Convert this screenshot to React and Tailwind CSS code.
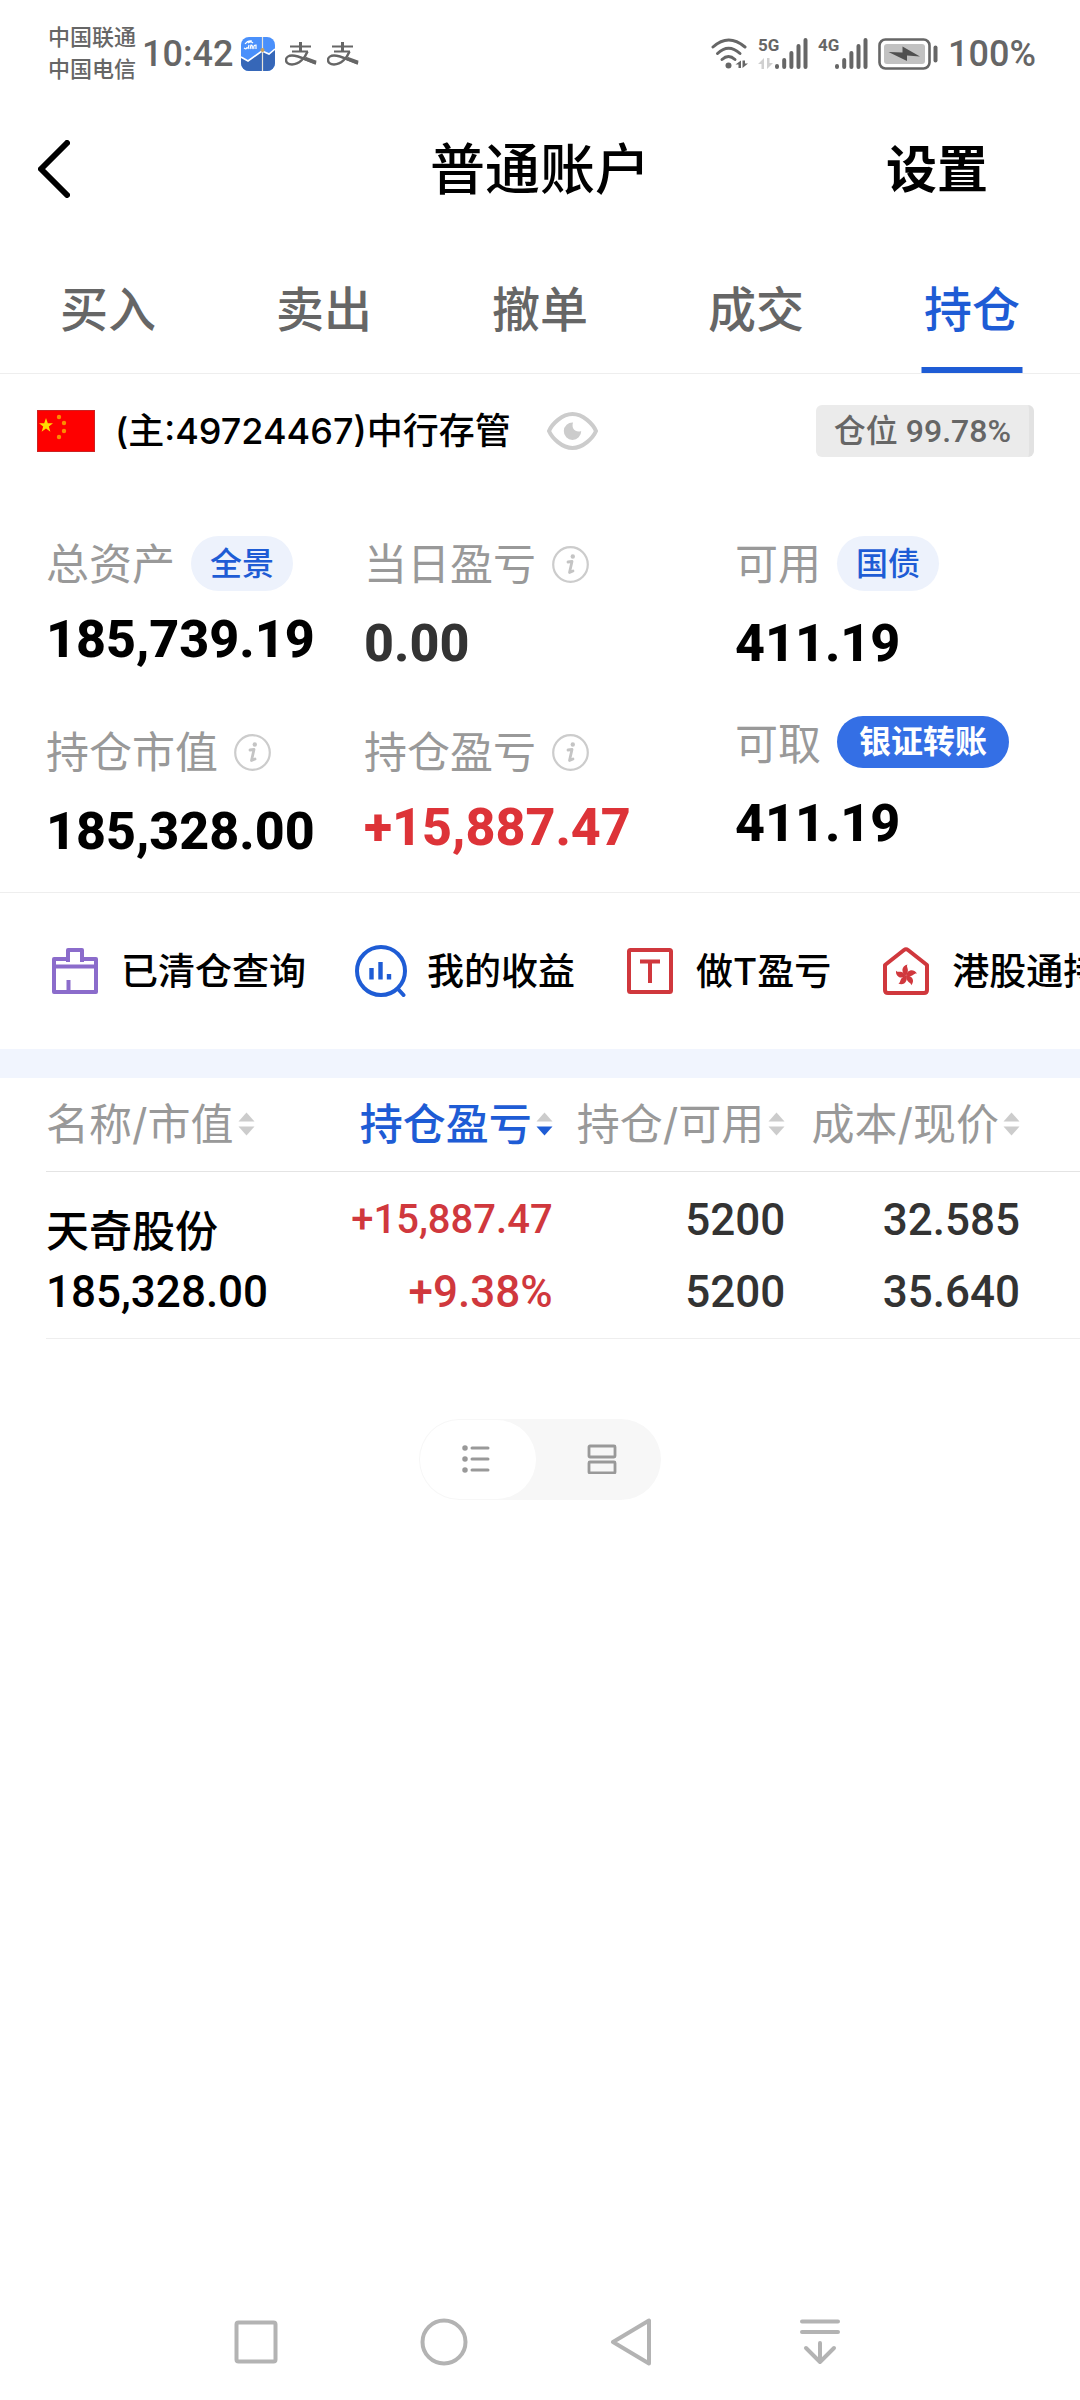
import React, { useState } from "react";

const tabs = ["买入", "卖出", "撤单", "成交", "持仓"];

const holdings = [
  {
    name: "天奇股份",
    value: "185,328.00",
    profit: "+15,887.47",
    rate: "+9.38%",
    amount: "5200",
    usable: "5200",
    cost: "32.585",
    price: "35.640",
  },
];

const StockAppIcon = () => (
  <svg className="size-[34px]" viewBox="0 0 34 34">
    <defs>
      <clipPath id="stock-app">
        <rect width="34" height="34" rx="8" />
      </clipPath>
    </defs>
    <g clipPath="url(#stock-app)">
      <rect width="34" height="34" fill="#4a90fb" />
      <path d="M0 20 L7 24 L21 14 L28 18 L34 12 V34 H0 Z" fill="#3667b8" />
      <path d="M0 20 L7 24 L21 14 L28 17 L34 12" fill="none" stroke="#fff" strokeWidth="1.6" />
      <path
        d="M3 11 q3 2 3-1 M7 12 l1-4 M9 12 l1-4 q2 0 1 4 M13 12 q-1-4 2-4 l0 4 M4 7 q3-4 7-3 M7 6 q3-2 5 0"
        fill="none"
        stroke="#fff"
        strokeWidth="1.2"
      />
      <path d="M21.500 0 V34" stroke="#e8e4da" strokeWidth="1.2" />
      <circle cx="21.500" cy="13" r="2" fill="#c9a05c" />
    </g>
  </svg>
);

const AlipayIcon = () => (
  <svg className="h-[24px] w-[32px]" viewBox="0 0 32 24" fill="none" stroke="#666">
    <path d="M5 4.500 H26 M7 9.500 H23" strokeWidth="2" />
    <path d="M15.500 0 V9" strokeWidth="3" />
    <path d="M22.500 9.500 C20 16 14 22.500 7 22.500 C3 22.500 1 20.500 1 18 C1 15 4 13.500 7 13.500 C14 13.500 21 18 31 21.500" strokeWidth="2.400" />
    <path d="M20 16.500 L31 20.500" strokeWidth="3.600" />
  </svg>
);

const WifiIcon = () => (
  <svg className="h-[31px] w-[37px]" viewBox="0 0 37 31" fill="none" stroke="#666" strokeWidth="3" strokeLinecap="round">
    <path d="M2 9 Q17.500 -5 34 9" />
    <path d="M6.500 15.500 Q17.500 5 29 15.500" />
    <path d="M11 21.500 Q17.500 15.500 24 21.500" />
    <circle cx="17.500" cy="27.500" r="3" fill="#666" stroke="none" />
    <path d="M30 22.500 V30 H27.500 V26.500 H24.500 Z M31.500 22.500 V30 L37 25.500 H34 V22.500 Z" fill="#666" stroke="none" />
  </svg>
);

const Signal = ({ label, data }) => (
  <div className="flex h-[31px]">
    <div className="flex w-[17px] flex-col justify-between">
      <span className="text-[17px] leading-[15px] font-bold">{label}</span>
      {data && (
        <svg className="h-[11px] w-[15px]" viewBox="0 0 15 11" fill="#d0d0d0">
          <path d="M6 0 V11 H3.500 V6 H0 Z M9 0 V11 L15 5 H11.500 V0 Z" />
        </svg>
      )}
    </div>
    <svg className="h-[31px] w-[33px]" viewBox="0 0 33 31" stroke="#666" strokeWidth="4" strokeLinecap="round">
      <path d="M2 28 V29 M9.200 22 V29 M16.400 15 V29 M23.500 8 V29 M30.500 2 V29" />
    </svg>
  </div>
);

const BatteryIcon = () => (
  <svg className="h-[32px] w-[60px]" viewBox="0 0 60 32">
    <rect x="1.500" y="1.500" width="50" height="29" rx="6" fill="none" stroke="#666" strokeWidth="2.600" />
    <rect x="6" y="6" width="41" height="20" rx="3" fill="#c2c2c2" />
    <path d="M10.500 14 L24.500 14.500 V8.500 L42 18.500 L29 17.500 V23 Z" fill="#505050" />
    <rect x="55.500" y="7.500" width="4" height="17" rx="2" fill="#666" />
  </svg>
);

const InfoIcon = () => (
  <svg className="size-[37px] self-center" viewBox="0 0 37 37" fill="none" stroke="#ccc">
    <circle cx="18.500" cy="18.500" r="17.300" strokeWidth="2.200" />
    <circle cx="20.800" cy="10.500" r="2.200" fill="#c4c4c4" stroke="none" />
    <path d="M16 16 L20 15.500 L17.500 26.500 L21 25" stroke="#c4c4c4" strokeWidth="2.800" strokeLinecap="round" strokeLinejoin="round" />
  </svg>
);

const FlagIcon = () => (
  <svg className="h-[42px] w-[58px]" viewBox="0 0 58 42">
    <rect x="0.500" y="0.500" width="57" height="41" fill="#fe0000" stroke="#c22" />
    <path d="M9 8 L10.800 13.300 H16 L11.800 16.500 L13.400 21.800 L9 18.600 L4.600 21.800 L6.200 16.500 L2 13.300 H7.200 Z" fill="#fd0" />
    <g fill="#fb8c00">
      <circle cx="22" cy="7" r="2.200" />
      <circle cx="27" cy="13" r="2.200" />
      <circle cx="27" cy="21" r="2.200" />
      <circle cx="22" cy="27" r="2.200" />
    </g>
  </svg>
);

const EyeIcon = () => (
  <svg className="h-[38px] w-[51px]" viewBox="0 0 51 38">
    <path
      d="M2 19 C5 12 15 2 25.500 2 C36 2 46 12 49 19 C46 26 36 36 25.500 36 C15 36 5 26 2 19 Z"
      fill="none"
      stroke="#ccc"
      strokeWidth="4"
    />
    <path d="M26 10.500 A8.700 8.700 0 1 0 34.200 19 C29 21 24 17 26 10.500 Z" fill="#ccc" />
  </svg>
);

const ClearedIcon = () => (
  <svg className="size-[46px]" viewBox="0 0 46 46" fill="none" stroke="#8b6ccb" strokeWidth="4" strokeLinejoin="round">
    <path d="M2 44 V11 H16 V2 H30 V11 H44 V44 Z" />
    <path d="M2 18.500 H44 M16.500 32 V44" />
    <path d="M16 11 V14 M30 11 V14" />
  </svg>
);

const IncomeIcon = () => (
  <svg className="size-[52px]" viewBox="0 0 52 52" fill="none" stroke="#1e5cd5" strokeWidth="4">
    <circle cx="26" cy="26" r="24" />
    <path d="M43 44 L48.500 50" strokeLinecap="round" />
    <path d="M16.500 23 V34.500 M25.500 17 V34.500 M34 29 V34.500" strokeWidth="4.400" />
  </svg>
);

const TradeIcon = () => (
  <svg className="size-[46px]" viewBox="0 0 46 46" fill="none" stroke="#d0383d" strokeWidth="4">
    <rect x="2" y="2" width="42" height="42" rx="1.500" />
    <path d="M13 13.500 H33 M23 13.500 V35" />
  </svg>
);

const HongKongIcon = () => (
  <svg className="h-[48px] w-[46px]" viewBox="0 0 46 48" fill="none" stroke="#d0383d" strokeWidth="4">
    <path d="M2 18 L21 3 Q23 1.500 25 3 L44 18 V43 Q44 46 41 46 H5 Q2 46 2 43 Z" strokeLinejoin="round" />
    <g fill="#d0383d" stroke="none">
      {[0, 72, 144, 216, 288].map((angle) => (
        <path key={angle} d="M23 28.500 C18 26 18 19 24.500 17.500 C22.500 20.500 27.500 22 23 28.500 Z" transform={`rotate(${angle} 23 28.500)`} />
      ))}
    </g>
  </svg>
);

const shortcuts = [
  { name: "已清仓查询", Icon: ClearedIcon },
  { name: "我的收益", Icon: IncomeIcon },
  { name: "做T盈亏", Icon: TradeIcon },
  { name: "港股通持仓", Icon: HongKongIcon },
];

const Stat = ({ label, value, extra, className }) => (
  <div className={`flex flex-col ${className}`}>
    <div className="flex h-14 items-start gap-4">
      <span className="text-[43px] leading-[56px] whitespace-nowrap text-[#999]">{label}</span>
      {extra}
    </div>
    <div className="font-[Roboto] text-[52px] leading-[56px] font-extrabold">{value}</div>
  </div>
);

const PillButton = ({ children }) => (
  <button className="h-[55px] rounded-full bg-[#edf2fc] px-[19px] text-[32px] leading-none font-medium whitespace-nowrap text-[#1e5cd5]">
    {children}
  </button>
);

const SortHeader = ({ children, active }) => (
  <button
    className={`inline-flex items-center gap-1 whitespace-nowrap ${active ? "font-medium text-[#1e5cd5]" : "text-[#999]"}`}
  >
    {children}
    <svg className="h-[24px] w-[17px]" viewBox="0 0 17 24">
      <path d="M8.500 0.500 L16.500 9.500 H0.500 Z" fill="#ccc" />
      <path d="M8.500 23.500 L16.500 14.500 H0.500 Z" fill={active ? "#1e5cd5" : "#ccc"} />
    </svg>
  </button>
);

const App = () => {
  const [activeTab, setActiveTab] = useState("持仓");

  return (
    <div className="flex min-h-screen flex-col overflow-hidden bg-white font-[Inter,'Noto_Sans_CJK_SC',sans-serif] text-black">
      {/* status bar */}
      <div className="flex h-[107px] items-center justify-between pr-11 pl-12 font-[Roboto,'Noto_Sans_CJK_SC',sans-serif] text-[#666]">
        <div className="flex items-center">
          <div className="text-[22px] leading-8 font-medium">
            <div>中国联通</div>
            <div>中国电信</div>
          </div>
          <span className="ml-[6px] text-[36px] leading-none font-medium">10:42</span>
          <div className="ml-2 flex items-center gap-[10px]">
            <StockAppIcon />
            <AlipayIcon />
            <AlipayIcon />
          </div>
        </div>
        <div className="flex items-center gap-[10px]">
          <WifiIcon />
          <Signal label="5G" data />
          <Signal label="4G" />
          <BatteryIcon />
          <span className="text-[36px] leading-none font-medium">100%</span>
        </div>
      </div>

      {/* header */}
      <header className="grid h-[124px] grid-cols-3 items-center">
        <button className="justify-self-start pl-[38px]" aria-label="返回">
          <svg className="h-[58px] w-[32px]" viewBox="0 0 32 58" fill="none" stroke="#000" strokeWidth="6" strokeLinecap="round" strokeLinejoin="round">
            <path d="M29 3 L3 29 L29 55" />
          </svg>
        </button>
        <h1 className="text-center text-[55px] leading-none font-medium">普通账户</h1>
        <button className="justify-self-end pr-[92px] text-[51px] leading-none font-bold">设置</button>
      </header>

      {/* tabs */}
      <nav className="grid h-[143px] grid-cols-5 border-b border-[#eee] pt-4">
        {tabs.map((tab) => (
          <button
            key={tab}
            onClick={() => setActiveTab(tab)}
            className={`relative text-[48px] leading-none font-medium ${tab === activeTab ? "text-[#1e5cd5]" : "text-[#666]"}`}
          >
            {tab}
            {tab === activeTab && (
              <span className="absolute bottom-0 left-1/2 h-[6px] w-[101px] -translate-x-1/2 bg-[#1e5cd5]" />
            )}
          </button>
        ))}
      </nav>

      {/* account */}
      <div className="flex h-[114px] items-center pr-[46px] pl-[37px]">
        <FlagIcon />
        <span className="ml-5 text-[36px] leading-none font-medium whitespace-nowrap">(主:49724467)中行存管</span>
        <button className="ml-9" aria-label="隐藏金额">
          <EyeIcon />
        </button>
        <div className="ml-auto flex h-[52px] items-center rounded-md border-r-[5px] border-[#e2e2e2] bg-[#ebebeb] px-[18px] font-[Roboto,'Noto_Sans_CJK_SC',sans-serif] text-[32px] leading-none font-medium whitespace-nowrap text-[#666]">
          仓位 99.78%
        </div>
      </div>

      {/* assets */}
      <section className="grid grid-cols-[318fr_371fr_345fr] border-b border-[#eee] pt-12 pb-8 pl-[46px]">
        <div className="flex flex-col gap-14">
          <Stat label="总资产" value="185,739.19" className="gap-5" extra={<PillButton>全景</PillButton>} />
          <Stat label="持仓市值" value="185,328.00" className="gap-6" extra={<InfoIcon />} />
        </div>
        <div className="flex flex-col gap-[52px]">
          <Stat label="当日盈亏" value="0.00" className="gap-6 *:last:text-[#333]" extra={<InfoIcon />} />
          <Stat label="持仓盈亏" value="+15,887.47" className="gap-5 *:last:text-[#dd3338]" extra={<InfoIcon />} />
        </div>
        <div className="flex flex-col gap-11">
          <Stat label="可用" value="411.19" className="gap-6" extra={<PillButton>国债</PillButton>} />
          <Stat
            label="可取"
            value="411.19"
            className="gap-6"
            extra={
              <button className="h-[52px] rounded-full bg-[#346fe5] px-[22px] text-[32px] leading-none font-bold whitespace-nowrap text-white">
                银证转账
              </button>
            }
          />
        </div>
      </section>

      {/* shortcuts */}
      <div className="flex h-[156px] items-center gap-[49px] overflow-hidden pl-[49px]">
        {shortcuts.map(({ name, Icon }) => (
          <button key={name} className="flex shrink-0 items-center gap-5 text-[37px] leading-none font-medium whitespace-nowrap">
            <span className="flex w-[52px] justify-center">
              <Icon />
            </span>
            {name}
          </button>
        ))}
      </div>
      <div className="h-[29px] bg-[#f1f5fe]" />

      {/* holdings */}
      <div className="pl-[46px]">
        <table className="w-full table-fixed border-collapse">
          <thead>
            <tr className="h-[93px] border-b border-[#e4e4e4] text-right text-[43px] leading-none *:font-normal">
              <th className="w-[28%] text-left">
                <SortHeader>名称/市值</SortHeader>
              </th>
              <th className="w-[21%]">
                <SortHeader active>持仓盈亏</SortHeader>
              </th>
              <th className="w-[22.5%]">
                <SortHeader>持仓/可用</SortHeader>
              </th>
              <th className="pr-[60px]">
                <SortHeader>成本/现价</SortHeader>
              </th>
            </tr>
          </thead>
          <tbody>
            {holdings.map((item) => (
              <tr
                key={item.name}
                className="h-[167px] border-b border-[#eee] text-right font-[Roboto,'Noto_Sans_CJK_SC',sans-serif] text-[44px] font-medium text-[#333] *:pb-4 *:align-bottom"
              >
                <td className="text-left text-black">
                  <div className="text-[43px] leading-[60px]">{item.name}</div>
                  <div className="leading-[60px]">{item.value}</div>
                </td>
                <td className="text-[#d0383d]">
                  <div className="text-[40px] leading-[84px]">{item.profit}</div>
                  <div className="leading-[60px]">{item.rate}</div>
                </td>
                <td>
                  <div className="leading-[84px]">{item.amount}</div>
                  <div className="leading-[60px]">{item.usable}</div>
                </td>
                <td className="pr-[60px]">
                  <div className="leading-[84px]">{item.cost}</div>
                  <div className="leading-[60px]">{item.price}</div>
                </td>
              </tr>
            ))}
          </tbody>
        </table>
      </div>

      {/* list / card switch */}
      <div className="mt-20 flex h-[81px] w-[242px] self-center rounded-full bg-[#f7f7f7] p-px">
        <button className="flex w-[116px] items-center justify-center rounded-full bg-white pr-1" aria-label="列表">
          <svg className="h-[30px] w-[28px]" viewBox="0 0 28 30" stroke="#999" strokeWidth="3" strokeLinecap="round">
            <path d="M10 4 H26 M10 15 H26 M10 26 H26" />
            <path d="M3 4 V4 M3 15 V15 M3 26 V26" strokeWidth="5.500" />
          </svg>
        </button>
        <button className="flex flex-1 items-center justify-center pl-2" aria-label="卡片">
          <svg className="h-[30px] w-[30px]" viewBox="0 0 30 30" fill="none" stroke="#999" strokeWidth="2.800">
            <rect x="2" y="2" width="26" height="11" rx="1" />
            <rect x="2" y="18" width="26" height="11" rx="1" />
          </svg>
        </button>
      </div>

      {/* system navigation */}
      <footer className="mt-auto flex h-[116px] justify-center pr-1 *:flex *:w-[188px] *:items-center *:justify-center">
        <button aria-label="最近任务">
          <svg className="size-12" viewBox="0 0 48 48" fill="none" stroke="#b3b3b3" strokeWidth="4">
            <rect x="4.500" y="4.500" width="39" height="39" rx="2" />
          </svg>
        </button>
        <button aria-label="主页">
          <svg className="size-12" viewBox="0 0 48 48" fill="none" stroke="#b3b3b3" strokeWidth="4">
            <circle cx="24" cy="24" r="21.500" />
          </svg>
        </button>
        <button aria-label="后退">
          <svg className="size-12" viewBox="0 0 48 48" fill="none" stroke="#b3b3b3" strokeWidth="4" strokeLinejoin="round">
            <path d="M41 2.500 V45.500 L5 24 Z" />
          </svg>
        </button>
        <button aria-label="通知栏">
          <svg className="size-12" viewBox="0 0 48 48" fill="none" stroke="#b3b3b3" strokeWidth="4" strokeLinecap="round" strokeLinejoin="round">
            <path d="M6 3.500 H42 M6 14 H42 M24 25 V44 M10 30 L24 44 L38 30" />
          </svg>
        </button>
      </footer>
    </div>
  );
};

export default App;
